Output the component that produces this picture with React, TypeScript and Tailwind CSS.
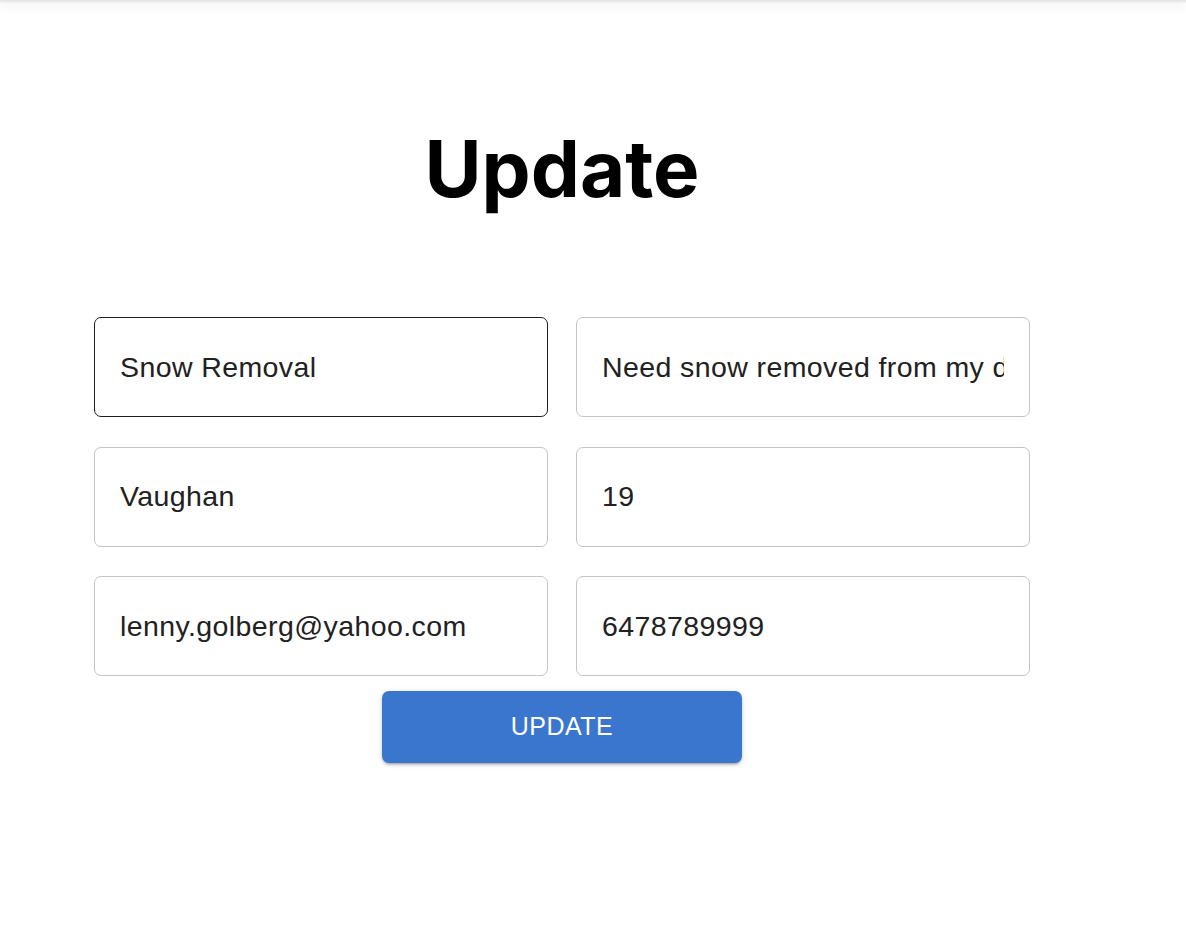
const fields = [
  { value: "Snow Removal", focused: true },
  { value: "Need snow removed from my driveway and sidewalk" },
  { value: "Vaughan" },
  { value: "19" },
  { value: "lenny.golberg@yahoo.com" },
  { value: "6478789999" },
];

function Field({ value, focused }: { value: string; focused?: boolean }) {
  return (
    <input
      readOnly
      value={value}
      className={
        "h-[100px] w-full rounded-[7px] border bg-white px-[25px] text-[28.5px] tracking-[0.4px] text-[#212121] outline-none " +
        (focused ? "border-[#1f1f1f]" : "border-[#c4c4c4]")
      }
      style={{ fontFamily: '"Liberation Sans", Arial, sans-serif' }}
    />
  );
}

export default function App() {
  return (
    <div className="min-h-[936px] w-full bg-white">
      <div className="h-[3px] bg-gradient-to-b from-[#e2e2e2] to-[#f4f4f4] shadow-[0_3px_10px_rgba(0,0,0,0.1)]" />
      <div className="ml-[94px] flex w-[936px] flex-col items-center pt-[127px]">
        <h1
          className="text-[78px] font-bold leading-none text-black"
          style={{ fontFamily: "Inter, sans-serif" }}
        >
          Update
        </h1>
        <div className="mt-[109px] grid w-full grid-cols-2 gap-x-[28px] gap-y-[29.5px]">
          {fields.map((f) => (
            <Field key={f.value} value={f.value} focused={f.focused} />
          ))}
        </div>
        <button
          className="mt-[15px] h-[72px] w-[360px] rounded-[7px] bg-[#3a76cd] text-[25px] font-medium uppercase tracking-[0.5px] text-white shadow-[0_3px_2px_-2px_rgba(0,0,0,0.2),0_2px_3px_0_rgba(0,0,0,0.14),0_1px_6px_0_rgba(0,0,0,0.12)]"
          style={{ fontFamily: '"Liberation Sans", Arial, sans-serif' }}
        >
          Update
        </button>
      </div>
    </div>
  );
}
